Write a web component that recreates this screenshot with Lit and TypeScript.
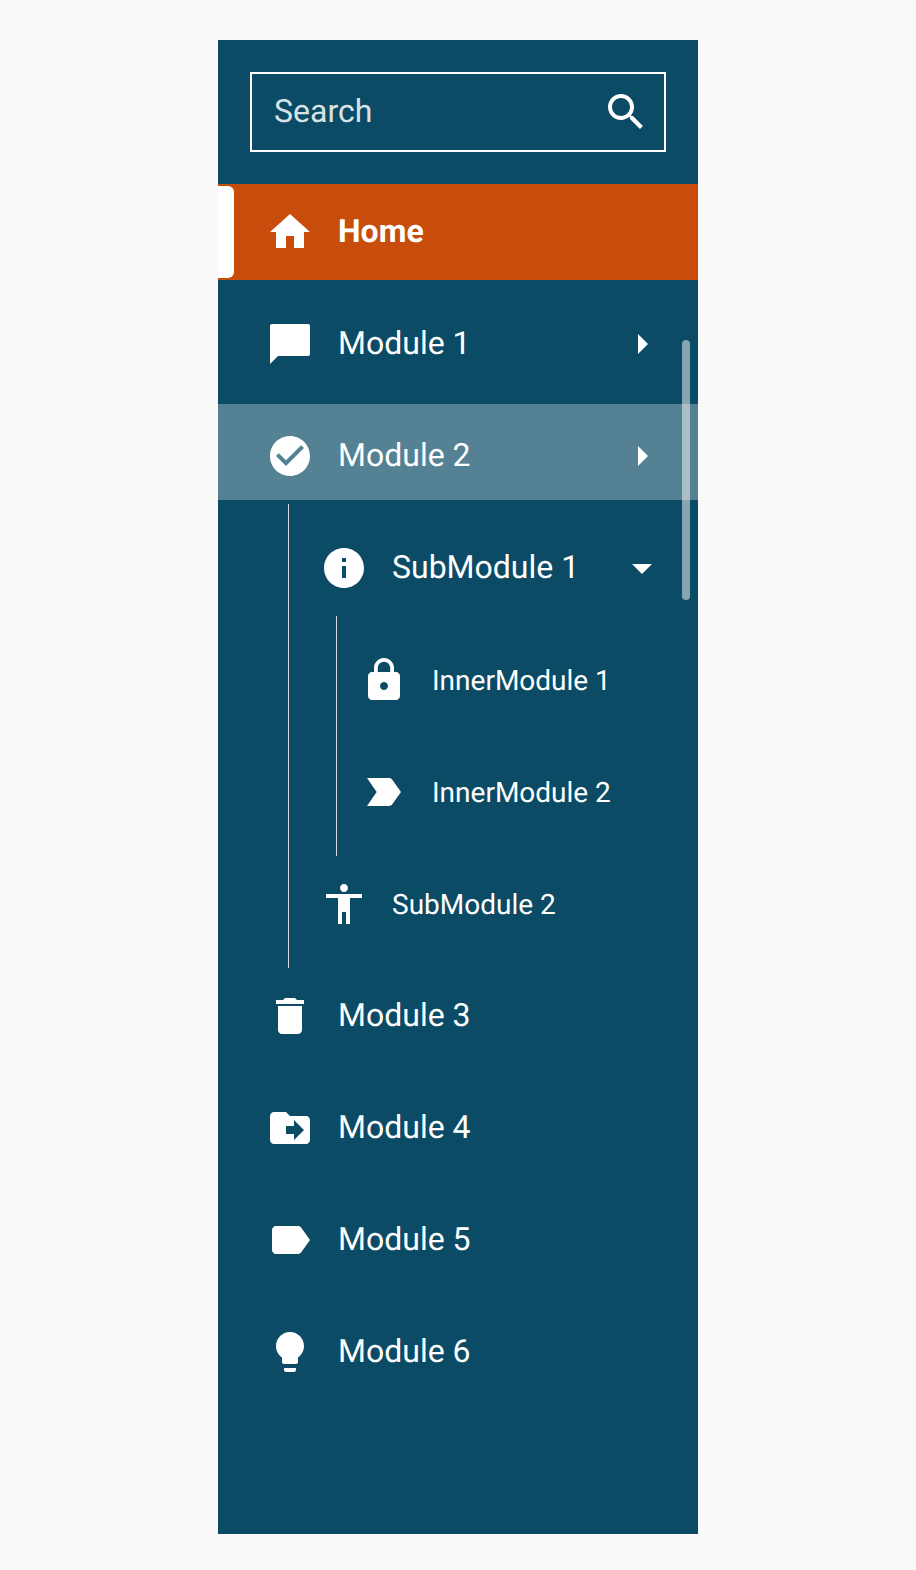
import { LitElement, css, html, svg } from "lit";
import { customElement } from "lit/decorators.js";

const ICONS: Record<string, string> = {
  search:
    "M15.5 14h-.79l-.28-.27C15.41 12.59 16 11.11 16 9.5 16 5.91 13.09 3 9.5 3S3 5.91 3 9.5 5.91 16 9.5 16c1.61 0 3.09-.59 4.23-1.57l.27.28v.79l5 4.99L20.49 19l-4.99-5zm-6 0C7.01 14 5 11.99 5 9.5S7.01 5 9.5 5 14 7.01 14 9.5 11.99 14 9.5 14z",
  home: "M10 20v-6h4v6h5v-8h3L12 3 2 12h3v8z",
  chat: "M21 2H3a1 1 0 0 0-1 1v19l4-4h15a1 1 0 0 0 1-1V3a1 1 0 0 0-1-1z",
  check:
    "M12 2C6.48 2 2 6.48 2 12s4.48 10 10 10 10-4.48 10-10S17.52 2 12 2zm-2 15l-5-5 1.41-1.41L10 14.17l7.59-7.59L19 8l-9 9z",
  info: "M12 2C6.48 2 2 6.48 2 12s4.48 10 10 10 10-4.48 10-10S17.52 2 12 2zm1 15h-2v-6h2v6zm0-8h-2V7h2v2z",
  lock: "M18 8h-1V6c0-2.76-2.24-5-5-5S7 3.24 7 6v2H6c-1.1 0-2 .9-2 2v10c0 1.1.9 2 2 2h12c1.1 0 2-.9 2-2V10c0-1.1-.9-2-2-2zm-6 9c-1.1 0-2-.9-2-2s.9-2 2-2 2 .9 2 2-.9 2-2 2zm3.1-9H8.9V6c0-1.71 1.39-3.1 3.1-3.1 1.71 0 3.1 1.39 3.1 3.1v2z",
  important:
    "M3.5 18.99l11 .01c.67 0 1.27-.33 1.63-.84L20.5 12l-4.37-6.16c-.36-.51-.96-.84-1.63-.84l-11 .01L8.34 12 3.5 18.99z",
  person:
    "M12 2c1.1 0 2 .9 2 2s-.9 2-2 2-2-.9-2-2 .9-2 2-2zm9 7h-6v13h-2v-6h-2v6H9V9H3V7h18v2z",
  trash: "M6 19c0 1.1.9 2 2 2h8c1.1 0 2-.9 2-2V7H6v12zM19 4h-3.5l-1-1h-5l-1 1H5v2h14V4z",
  folder:
    "M20 6h-8l-2-2H4c-1.1 0-1.99.9-1.99 2L2 18c0 1.1.9 2 2 2h16c1.1 0 2-.9 2-2V8c0-1.1-.9-2-2-2zm-6 12v-3h-4v-4h4V8l5 5-5 5z",
  label:
    "M17.63 5.84C17.27 5.33 16.67 5 16 5L5 5.01C3.9 5.01 3 5.9 3 7v10c0 1.1.9 1.99 2 1.99L16 19c.67 0 1.27-.33 1.63-.84L22 12l-4.37-6.16z",
  bulb: "M9 21c0 .55.45 1 1 1h4c.55 0 1-.45 1-1v-1H9v1zm3-19C8.14 2 5 5.14 5 9c0 2.38 1.19 4.47 3 5.74V17c0 .55.45 1 1 1h6c.55 0 1-.45 1-1v-2.26c1.81-1.27 3-3.36 3-5.74 0-3.86-3.14-7-7-7z",
  right: "M10 17l5-5-5-5v10z",
  down: "M7 10l5 5 5-5z",
};

function icon(name: string) {
  return html`<svg class="icon" viewBox="0 0 24 24" fill="currentColor">
    ${svg`<path d=${ICONS[name]}></path>`}
  </svg>`;
}

@customElement("app-root")
export class AppRoot extends LitElement {
  static styles = css`
    :host {
      display: flex;
      justify-content: center;
      padding: 40px 0 36px;
      background: #fafafa;
      font-family: Roboto, sans-serif;
      text-rendering: geometricPrecision;
    }

    .sidebar {
      position: relative;
      box-sizing: border-box;
      width: 480px;
      height: 1494px;
      background: #0b4b65;
      color: #fff;
    }

    .search {
      display: flex;
      align-items: center;
      box-sizing: border-box;
      height: 80px;
      margin: 32px 32px;
      padding: 0 14px 0 22px;
      border: 2px solid #fff;
      font-size: 32px;
      line-height: 48px;
    }

    .search .text {
      flex: 1;
      padding-bottom: 2px;
      color: rgba(255, 255, 255, 0.87);
    }

    .icon {
      flex: none;
      display: block;
      width: 48px;
      height: 48px;
    }

    .row {
      position: relative;
      display: flex;
      align-items: center;
      gap: 24px;
      height: 112px;
      padding: 0 32px 0 48px;
      font-size: 32px;
      line-height: 48px;
    }

    .row > * {
      position: relative;
    }

    .row .text {
      padding-bottom: 2px;
    }

    .row .arrow {
      margin-left: auto;
    }

    .home {
      height: 96px;
      margin-bottom: 8px;
      background: #c84c0c;
      font-weight: 700;
    }

    .home::before {
      content: "";
      position: absolute;
      left: 0;
      top: 2px;
      bottom: 2px;
      width: 16px;
      border-radius: 0 6px 6px 0;
      background: #fff;
    }

    .selected::before {
      content: "";
      position: absolute;
      left: 0;
      right: 0;
      top: 4px;
      bottom: 12px;
      background: rgba(255, 255, 255, 0.3);
    }

    .children {
      position: relative;
    }

    .children::before {
      content: "";
      position: absolute;
      top: -8px;
      bottom: -8px;
      left: 70px;
      width: 1px;
      background: #d5dde1;
    }

    .children .row {
      padding-left: 102px;
    }

    .children .children::before {
      left: 118px;
    }

    .children .children .row {
      padding-left: 142px;
    }

    .row.small {
      font-size: 28px;
      line-height: normal;
    }

    .row.small .text {
      padding-bottom: 0;
    }

    .scrollbar {
      position: absolute;
      top: 300px;
      right: 8px;
      width: 8px;
      height: 260px;
      border-radius: 4px;
      background: rgba(255, 255, 255, 0.5);
    }
  `;

  private row(
    name: string,
    label: string,
    opts: { arrow?: string; cls?: string } = {}
  ) {
    return html`<div class="row ${opts.cls ?? ""}">
      ${icon(name)}
      <span class="text">${label}</span>
      ${opts.arrow
        ? html`<span class="arrow">${icon(opts.arrow)}</span>`
        : ""}
    </div>`;
  }

  render() {
    return html`
      <nav class="sidebar">
        <div class="search">
          <span class="text">Search</span>
          ${icon("search")}
        </div>
        ${this.row("home", "Home", { cls: "home" })}
        ${this.row("chat", "Module 1", { arrow: "right" })}
        ${this.row("check", "Module 2", { arrow: "right", cls: "selected" })}
        <div class="children">
          ${this.row("info", "SubModule 1", { arrow: "down" })}
          <div class="children">
            ${this.row("lock", "InnerModule 1", { cls: "small" })}
            ${this.row("important", "InnerModule 2", { cls: "small" })}
          </div>
          ${this.row("person", "SubModule 2", { cls: "small" })}
        </div>
        ${this.row("trash", "Module 3")}
        ${this.row("folder", "Module 4")}
        ${this.row("label", "Module 5")}
        ${this.row("bulb", "Module 6")}
        <div class="scrollbar"></div>
      </nav>
    `;
  }
}
